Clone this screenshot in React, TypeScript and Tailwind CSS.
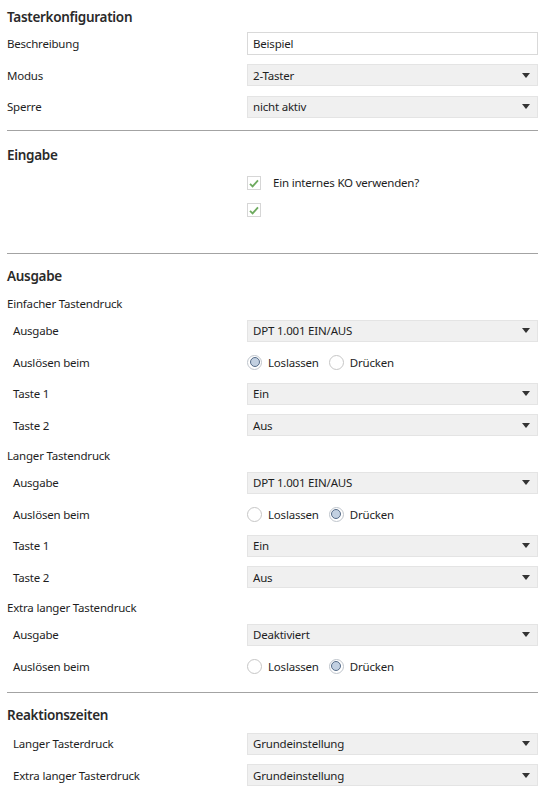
import React from "react";

type Ctl =
  | { kind: "select"; value: string }
  | { kind: "input"; value: string }
  | { kind: "radio"; selected: 0 | 1 };

function Arrow() {
  return (
    <svg width="8" height="5" viewBox="0 0 8 5" className="shrink-0">
      <path d="M0 0h8L4 5z" fill="#333" />
    </svg>
  );
}

function Select({ value }: { value: string }) {
  return (
    <div className="flex-1 h-[22px] bg-[#f0f0f0] border border-[#e4e4e4] pl-[5px] pr-[7px] flex items-center justify-between">
      <span>{value}</span>
      <Arrow />
    </div>
  );
}

function TextInput({ value }: { value: string }) {
  return (
    <div className="flex-1 h-[23px] bg-white border border-[#d9d9d9] pl-[5px] flex items-center">
      {value}
    </div>
  );
}

function RadioDot({ on }: { on: boolean }) {
  return on ? (
    <div className="w-[15px] h-[15px] shrink-0 rounded-full border border-[#bfc5cc] bg-white flex items-center justify-center">
      <div className="w-[10px] h-[10px] rounded-full bg-[#c2d0e1] border border-[#566c88]" />
    </div>
  ) : (
    <div className="w-[15px] h-[15px] shrink-0 rounded-full border border-[#c6c6c6] bg-white" />
  );
}

function Radios({ selected }: { selected: 0 | 1 }) {
  return (
    <div className="flex-1 flex items-center">
      <RadioDot on={selected === 0} />
      <span className="ml-[6px] mr-[10px]">Loslassen</span>
      <RadioDot on={selected === 1} />
      <span className="ml-[6px]">Drücken</span>
    </div>
  );
}

function Row({ label, ctl, indent }: { label: string; ctl: Ctl; indent?: boolean }) {
  return (
    <div className="h-[31.5px] flex items-center">
      <div className={`w-[240px] shrink-0 ${indent ? "pl-[6px]" : ""}`}>{label}</div>
      {ctl.kind === "select" && <Select value={ctl.value} />}
      {ctl.kind === "input" && <TextInput value={ctl.value} />}
      {ctl.kind === "radio" && <Radios selected={ctl.selected} />}
    </div>
  );
}

function Check({ text }: { text?: string }) {
  return (
    <div className="h-[27px] flex items-center pl-[240px]">
      <div className="w-[14px] h-[14px] border border-[#d6d6d6] bg-white flex items-center justify-center">
        <svg width="10" height="9" viewBox="0 0 10 9">
          <path d="M1 4.8l2.6 2.6L9 1.4" fill="none" stroke="#6daa5e" strokeWidth="1.8" />
        </svg>
      </div>
      {text && <span className="ml-[12px]">{text}</span>}
    </div>
  );
}

function Sub({ text }: { text: string }) {
  return <div className="h-[26px] pt-[6px] leading-[18px]">{text}</div>;
}

function Heading({ text, className }: { text: string; className: string }) {
  return (
    <div className={`leading-[20px] text-[13.5px] tracking-[-0.3px] font-semibold text-[#2a2a2a] ${className}`}>
      {text}
    </div>
  );
}

function Rule({ className }: { className: string }) {
  return <div className={`h-px bg-[#a3a3a3] ${className}`} />;
}

export default function App() {
  return (
    <div className="w-[548px] h-[795px] bg-white pl-[7px] pr-[10px] text-[11.5px] tracking-[-0.2px] text-[#1e1e1e] font-['Segoe_UI','Noto_Sans',sans-serif] overflow-hidden">
      {/* Tasterkonfiguration */}
      <Heading text="Tasterkonfiguration" className="pt-[7px] pb-[1px]" />
      <Row label="Beschreibung" ctl={{ kind: "input", value: "Beispiel" }} />
      <Row label="Modus" ctl={{ kind: "select", value: "2-Taster" }} />
      <Row label="Sperre" ctl={{ kind: "select", value: "nicht aktiv" }} />
      <Rule className="mt-[7.5px]" />

      {/* Eingabe */}
      <Heading text="Eingabe" className="pt-[14px] pb-[4.5px]" />
      <Check text="Ein internes KO verwenden?" />
      <Check />
      <Rule className="mt-[29.5px]" />

      {/* Ausgabe */}
      <Heading text="Ausgabe" className="pt-[11.5px] pb-[3.5px]" />
      <Sub text="Einfacher Tastendruck" />
      <Row indent label="Ausgabe" ctl={{ kind: "select", value: "DPT 1.001 EIN/AUS" }} />
      <Row indent label="Auslösen beim" ctl={{ kind: "radio", selected: 0 }} />
      <Row indent label="Taste 1" ctl={{ kind: "select", value: "Ein" }} />
      <Row indent label="Taste 2" ctl={{ kind: "select", value: "Aus" }} />
      <Sub text="Langer Tastendruck" />
      <Row indent label="Ausgabe" ctl={{ kind: "select", value: "DPT 1.001 EIN/AUS" }} />
      <Row indent label="Auslösen beim" ctl={{ kind: "radio", selected: 1 }} />
      <Row indent label="Taste 1" ctl={{ kind: "select", value: "Ein" }} />
      <Row indent label="Taste 2" ctl={{ kind: "select", value: "Aus" }} />
      <Sub text="Extra langer Tastendruck" />
      <Row indent label="Ausgabe" ctl={{ kind: "select", value: "Deaktiviert" }} />
      <Row indent label="Auslösen beim" ctl={{ kind: "radio", selected: 1 }} />
      <Rule className="mt-[10px]" />

      {/* Reaktionszeiten */}
      <Heading text="Reaktionszeiten" className="pt-[12px] pb-[3px]" />
      <Row indent label="Langer Tasterdruck" ctl={{ kind: "select", value: "Grundeinstellung" }} />
      <Row indent label="Extra langer Tasterdruck" ctl={{ kind: "select", value: "Grundeinstellung" }} />
    </div>
  );
}
